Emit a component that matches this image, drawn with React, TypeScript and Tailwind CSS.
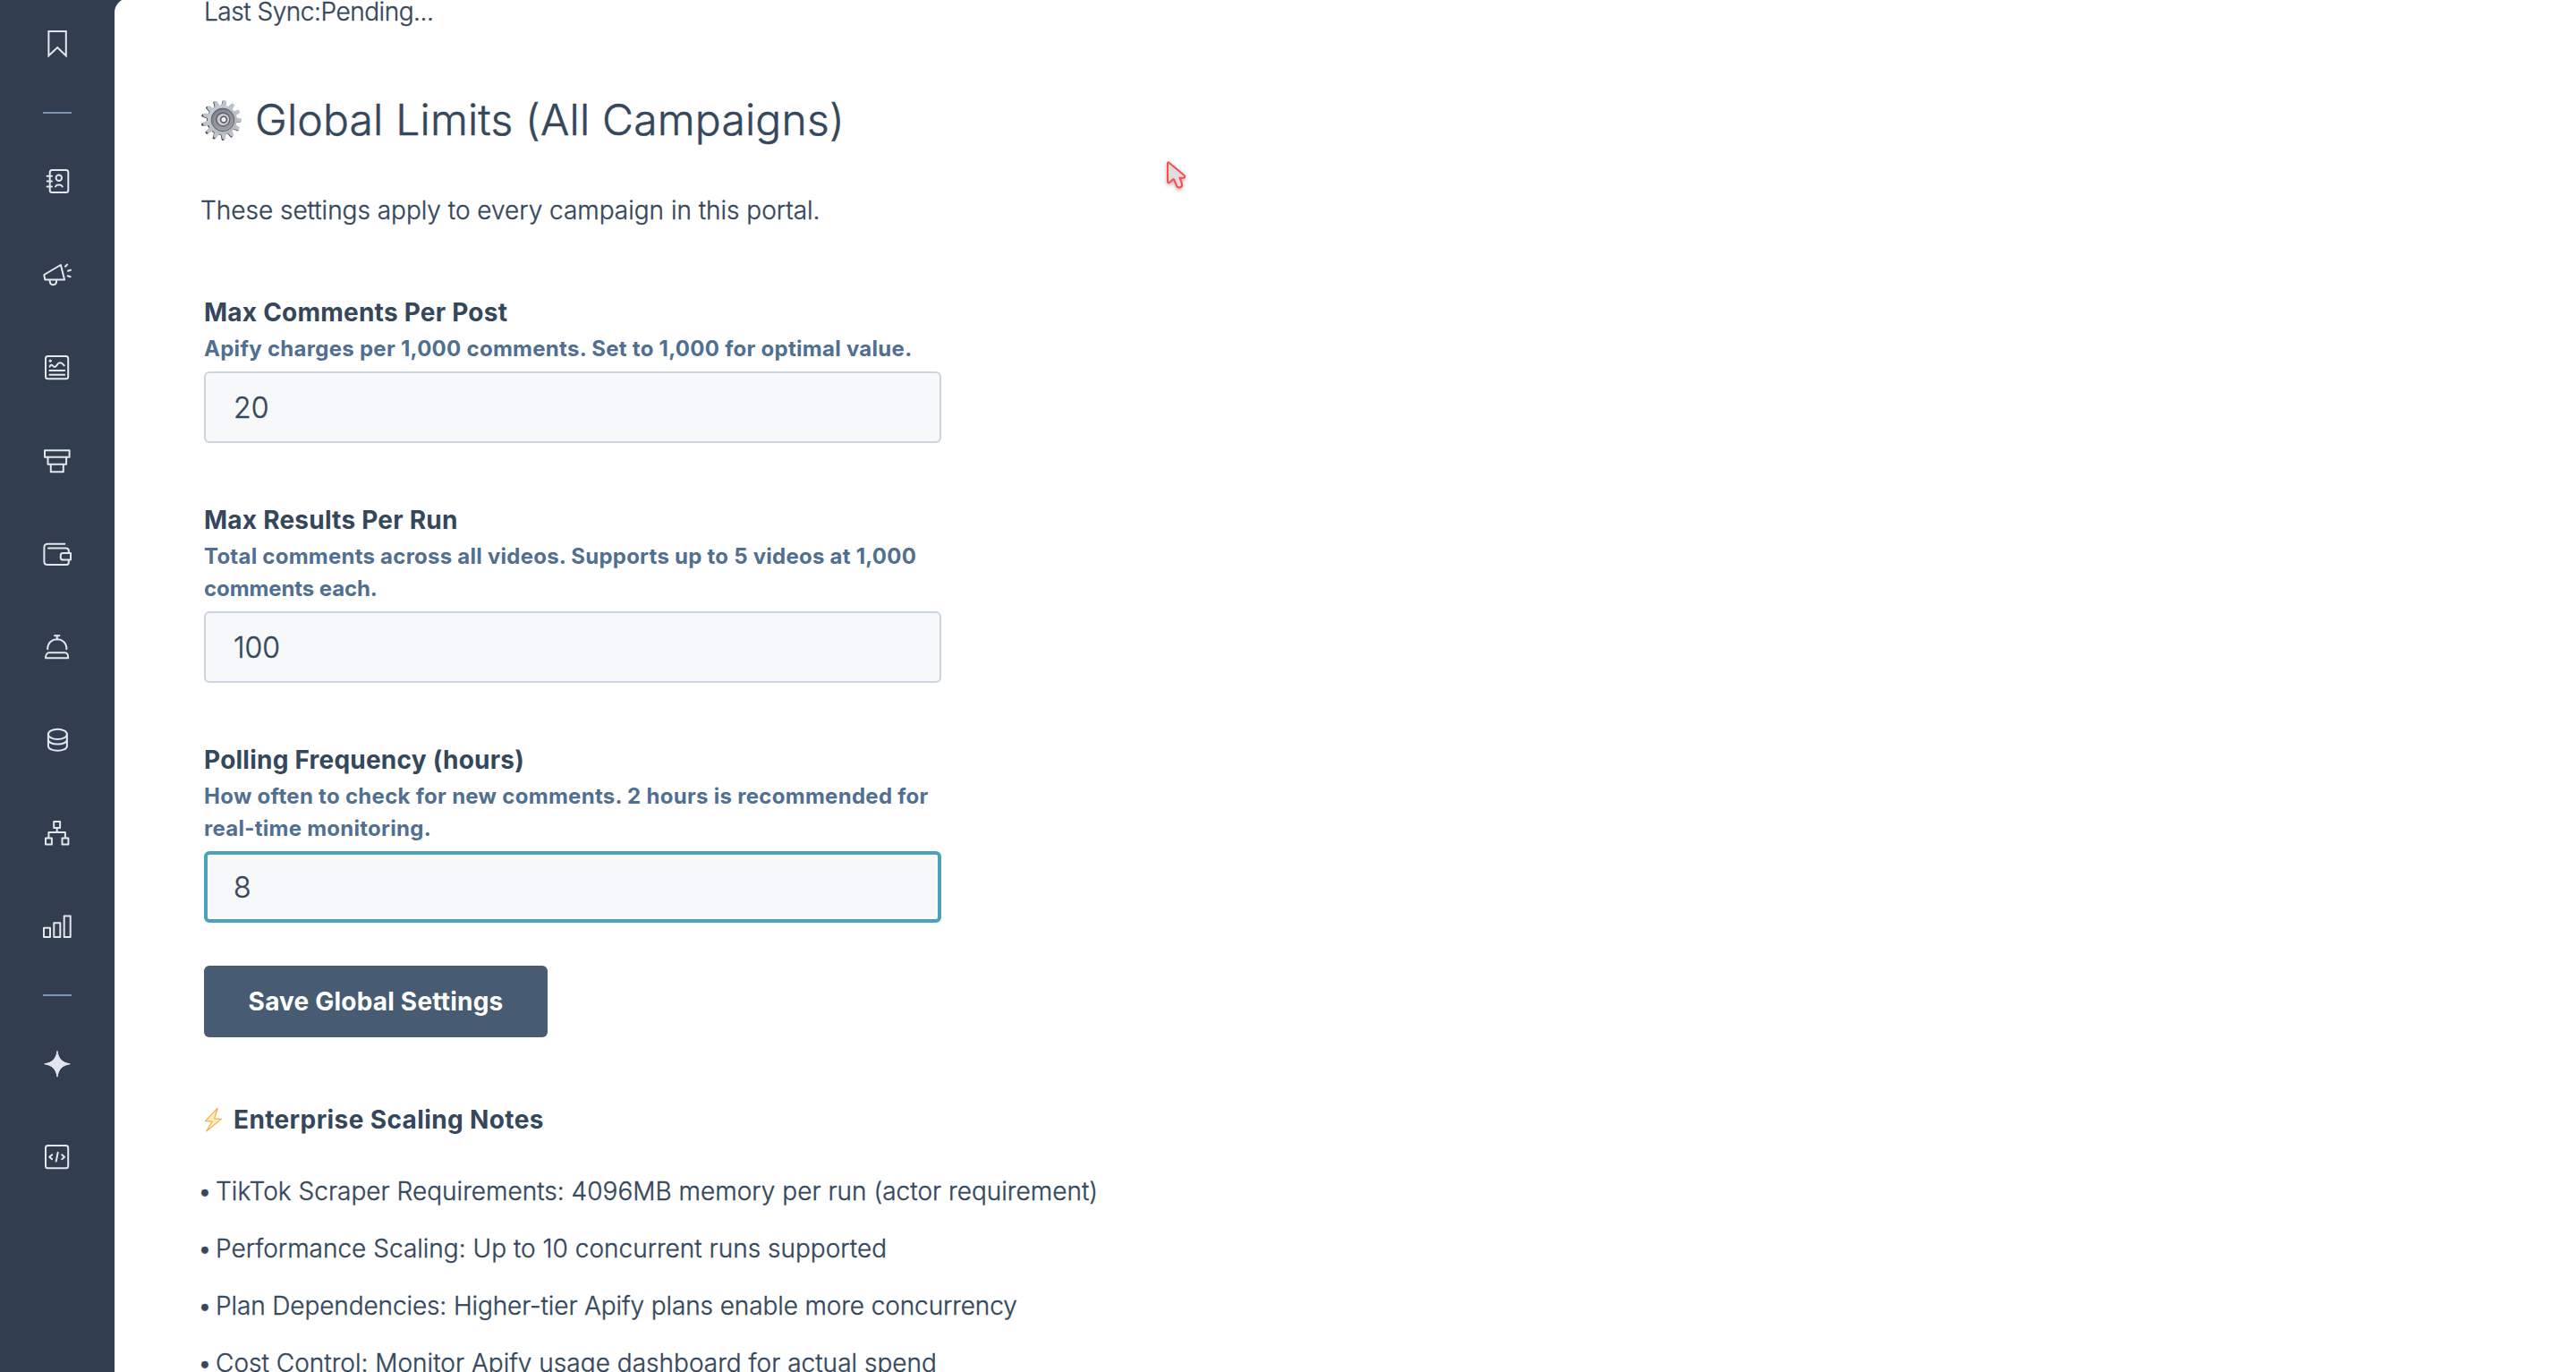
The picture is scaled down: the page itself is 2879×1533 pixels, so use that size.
import type { ReactNode } from 'react';
import { clsx } from 'clsx';

const Icon = ({ children }: { children: ReactNode }) => (
  <div className="h-[104px] w-full flex items-center justify-center shrink-0">
    <svg
      width="32"
      height="32"
      viewBox="0 0 32 32"
      fill="none"
      stroke="#e4e6ee"
      strokeWidth="2"
      strokeLinecap="round"
      strokeLinejoin="round"
    >
      {children}
    </svg>
  </div>
);

const Divider = () => <div className="h-0.5 w-8 mt-[25px] mb-[23px] bg-[#7f96b5] shrink-0" />;

const Sidebar = () => (
  <aside className="w-32 shrink-0 flex flex-col items-center -mt-1">
    <Icon>
      <path strokeLinejoin="miter" d="M6.4 3h19.4v27.3l-9.6-9.2-9.8 9.2z" />
    </Icon>
    <Divider />
    {/* Contacts */}
    <Icon>
      <rect x="7.7" y="4" width="20.6" height="25" rx="2.5" />
      <path d="M4.6 10.8h5.4M4.6 16.6h5.4M4.6 22.4h5.4" />
      <circle cx="17.8" cy="12.7" r="3.2" />
      <path d="M14 22.4c1.4-2.6 6.2-2.6 7.8 0" />
    </Icon>
    {/* Marketing */}
    <Icon>
      <path d="M1.3 17 19.9 6l4.2 16.6H2.3z" />
      <path d="M7.6 23.3c0 6.6 7.6 6.6 7.6 0" />
      <path d="M25 7.8l2.1-2.2M28 12.7l3-1M27.6 18.2l3 1" />
    </Icon>
    {/* Content */}
    <Icon>
      <rect x="3" y="4" width="25.2" height="25.2" rx="2.5" />
      <circle cx="8.2" cy="9.2" r="1.2" fill="#e4e6ee" strokeWidth="1" />
      <path d="M7.6 15.7c1-2.2 2.4-2.7 3.6-.9 1.6 2 3 1 4.2-.7 2.4-3.6 5.4-4 8.3.3M7.4 19.9h16.8M7.4 24.8h16.8" />
    </Icon>
    {/* Sales */}
    <Icon>
      <path d="M2 5.3h27.6v7.4H2zM5.5 12.7v8h20.6v-8M8.8 20.7v8.6h14v-8.6" />
    </Icon>
    {/* Commerce */}
    <Icon>
      <path d="M24.3 5.8H5.3C2.8 5.8 1.4 7 1.4 9.4v16c0 2.4 1.4 3.6 3.9 3.6h21.2c1.6 0 2.3-.9 2.3-2.4v-2.8M6 10.4h19.5c2.3 0 3.3 1 3.3 2.8v2.4" />
      <path d="M31 16v7.6h-8.4c-1.8 0-2.8-1-2.8-2.4v-2.8c0-1.4 1-2.4 2.8-2.4z" />
    </Icon>
    {/* Service */}
    <Icon>
      <path d="M13 4.2h5.4M15.8 4.2v4.2M5.2 19.3c0-14.6 21.2-14.6 21.2 0" />
      <path d="M6.8 23.2h17.8c2.2 0 3.6 2.6 3.6 6H3c0-3.4 1.6-6 3.8-6z" />
    </Icon>
    {/* Data */}
    <Icon>
      <ellipse cx="16.4" cy="10.4" rx="10.5" ry="5.6" />
      <path d="M5.9 10.4v13.1c0 7 21 7 21 0V10.4M5.9 16.2c0 7.2 21 7.2 21 0" />
    </Icon>
    {/* Automation */}
    <Icon>
      <path d="M12.2 4h6.9v6.9h-6.9zM3 22.5h6.9v6.9H3zM21.5 22.5h6.9v6.9h-6.9zM15.7 10.9V16M6.4 22.5V16h18.500v6.500" />
    </Icon>
    {/* Reporting */}
    <Icon>
      <path d="M1 18.7h7V29H1zM12.3 13.2h7V29h-7zM23.7 5.6h7V29h-7z" />
    </Icon>
    <Divider />
    <Icon>
      <path
        fill="#e4e6ee"
        strokeWidth="1"
        d="M16 2.8C17.4 11 21.400 15.400 30.200 16.800 21.400 18.200 17.400 22.600 16 31.200 14.600 22.600 10.600 18.200 1.800 16.800 10.600 15.400 14.600 11 16 2.800z"
      />
    </Icon>
    <Icon>
      <rect x="3" y="4" width="25.2" height="25.2" rx="2.5" />
      <path d="M10.2 14.2l-2.9 2.5 2.9 2.5M21.2 14.2l2.9 2.5-2.9 2.5M16.7 11.8l-2 9.8" />
    </Icon>
  </aside>
);

const teeth = Array.from({ length: 13 }, (_, i) => (i * 360) / 13 + 8);

const Gear = () => (
  <svg width="46" height="46" viewBox="0 0 46 46" className="shrink-0">
    <defs>
      <linearGradient id="metal" x1="0" y1="0" x2="1" y2="1">
        <stop offset="0" stopColor="#c9d2dc" />
        <stop offset="1" stopColor="#aeb0b8" />
      </linearGradient>
      <linearGradient id="disc" x1="0" y1="0" x2="0.4" y2="1">
        <stop offset="0" stopColor="#6c7076" />
        <stop offset="1" stopColor="#a0a2a6" />
      </linearGradient>
    </defs>
    <g fill="#4f4a45">
      {teeth.map((a) => (
        <path key={a} transform={`rotate(${a} 22 23.6)`} d="M19.8 9l.8-7.4q1.400-.8 2.800 0l.8 7.400z" />
      ))}
      <circle cx="22.4" cy="23.4" r="16.4" />
    </g>
    <g fill="#bcc3cc">
      {teeth.map((a) => (
        <path key={a} transform={`rotate(${a} 23.2 22.8)`} d="M20.2 9l1.200-7.600q1.800-.8 3.600 0l1.200 7.600z" />
      ))}
    </g>
    <circle cx="23.4" cy="22.8" r="16.4" fill="url(#metal)" />
    <circle cx="24" cy="22.8" r="12.8" fill="url(#disc)" stroke="#5f6369" strokeWidth="1" />
    <circle cx="24.2" cy="22.6" r="9.8" fill="none" stroke="#94989e" strokeWidth="1.2" />
    <circle cx="24.4" cy="22.6" r="7.4" fill="#c6cad1" stroke="#63676d" strokeWidth="1.4" />
    <circle cx="25" cy="22.6" r="3.4" fill="#f5f5f5" stroke="#5a5654" strokeWidth="1.600" />
  </svg>
);

const Bolt = () => (
  <svg width="21" height="29" viewBox="0 0 21 29" className="shrink-0">
    <path
      d="M15.3 1.2 1.5 15.6l7.6.6L2.6 27 19.4 13.4l-7.8-.6z"
      fill="#fdf0bd"
      stroke="#f3ae4b"
      strokeWidth="1.2"
      strokeLinejoin="round"
    />
  </svg>
);

const fields = [
  {
    label: 'Max Comments Per Post',
    lines: [['Apify charges per 1,000 comments. Set to 1,000 for optimal value.', 'tracking-[0.28px]']],
    value: '20',
  },
  {
    label: 'Max Results Per Run',
    lines: [
      ['Total comments across all videos. Supports up to 5 videos at 1,000', 'tracking-[0.24px]'],
      ['comments each.', 'tracking-[-0.1px]'],
    ],
    value: '100',
  },
  {
    label: 'Polling Frequency (hours)',
    lines: [
      ['How often to check for new comments. 2 hours is recommended for', 'tracking-[0.29px]'],
      ['real-time monitoring.', 'tracking-[0.26px]'],
    ],
    value: '8',
    focused: true,
  },
];

const notes = [
  ['TikTok Scraper Requirements: 4096MB memory per run (actor requirement)', 'tracking-[0.02px]'],
  ['Performance Scaling: Up to 10 concurrent runs supported', 'tracking-[0.01px]'],
  ['Plan Dependencies: Higher-tier Apify plans enable more concurrency', 'tracking-[-0.11px]'],
  ['Cost Control: Monitor Apify usage dashboard for actual spend', 'tracking-[0.02px]'],
];

const App = () => {
  return (
    <div className="h-[1533px] overflow-hidden flex bg-[#323e4f] font-['Inter',sans-serif] text-[#35475b] whitespace-nowrap">
      <Sidebar />

      <main className="flex-1 -mt-0.5 pl-[97px] bg-white rounded-tl-2xl flex flex-col items-start">
        <p className="-mt-[9px] ml-[3px] shrink-0 text-[28px] leading-[48px] font-light tracking-[-0.47px] [-webkit-text-stroke:0.35px]">
          Last Sync:Pending...
        </p>

        <h2 className="mt-[69px] mb-px shrink-0 flex items-center gap-[14px] text-[48px] leading-[56px] font-light tracking-[0.2px] [-webkit-text-stroke:0.5px]">
          <Gear />
          Global Limits (All Campaigns)
        </h2>

        <p className="mt-12 -ml-px shrink-0 text-[28px] leading-[48px] font-light tracking-[-0.02px] [-webkit-text-stroke:0.35px]">
          These settings apply to every campaign in this portal.
        </p>

        <form className="mt-[70px] ml-[3px] w-[824px] shrink-0 flex flex-col gap-[66px]">
          {fields.map((field) => (
            <div key={field.label}>
              <label className="block text-[28px] leading-10 font-bold tracking-[0.23px]">{field.label}</label>
              <div className="mt-[3px] text-[24px] leading-9 font-bold text-[#516f90]">
                {field.lines.map(([text, tracking]) => (
                  <p key={text} className={tracking}>
                    {text}
                  </p>
                ))}
              </div>
              <div
                className={clsx(
                  'mt-[7px] h-20 rounded-md bg-[#f6f8fa] flex items-center pt-0.5 text-[32px] font-light [-webkit-text-stroke:0.4px]',
                  field.focused
                    ? 'border-4 border-[#48a3bb] px-[29px] shadow-[inset_0_0_0_2px_#fff]'
                    : 'border-2 border-[#cbd5e2] px-[31px]'
                )}
              >
                {field.value}
              </div>
            </div>
          ))}
        </form>

        <button className="mt-12 ml-[3px] h-20 w-[384px] shrink-0 rounded-md bg-[#475b73] text-white text-[28px] font-bold tracking-[0.2px]">
          Save Global Settings
        </button>

        <h4 className="mt-[72px] ml-[3px] shrink-0 flex items-center gap-3 text-[28px] leading-10 font-bold tracking-[0.38px]">
          <Bolt />
          Enterprise Scaling Notes
        </h4>

        <ul className="mt-7 -ml-1 shrink-0 text-[28px] leading-[64px] font-light [-webkit-text-stroke:0.35px]">
          {notes.map(([text, tracking]) => (
            <li key={text} className="flex">
              <span className="w-5">•</span>
              <span className={tracking}>{text}</span>
            </li>
          ))}
        </ul>
      </main>

      {/* Mouse pointer */}
      <svg
        className="absolute left-[1300px] top-[177px] drop-shadow-[0_2px_2px_rgba(0,0,0,0.3)]"
        width="30"
        height="42"
        viewBox="0 0 30 42"
      >
        <path
          d="M5 5.3v20.4c0 1.500 1.200 2 2.200 1.100l3.900-3.500c.5-.4 1-.2 1.200.3l2.600 6.800c1.500 3.800 7.200 1.900 6-2.200l-2.300-6.500h3.800c1.700 0 2.400-1.600 1.200-2.800L6.500 4.700C5.800 4 5 4.300 5 5.300z"
          fill="#dedede"
          stroke="#ff4b4b"
          strokeWidth="2"
        />
      </svg>
    </div>
  );
};

export default App;
